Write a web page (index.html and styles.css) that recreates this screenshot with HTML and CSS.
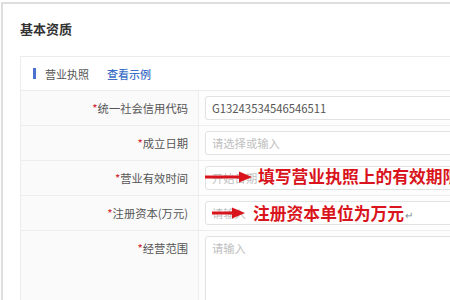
FILE: index.html
```html
<!DOCTYPE html>
<html lang="zh-CN">
<head>
<meta charset="utf-8">
<link rel="stylesheet" href="styles.css">
</head>
<body>
<div class="frame">
  <h2 class="title">基本资质</h2>
  <div class="card">
    <div class="card-head">
      <span class="bar"></span>
      <span class="head-text">营业执照</span>
      <a class="head-link">查看示例</a>
    </div>
    <div class="row">
      <div class="label"><span class="req">*</span>统一社会信用代码</div>
      <div class="value"><div class="input">G13243534546546511</div></div>
    </div>
    <div class="row">
      <div class="label"><span class="req">*</span>成立日期</div>
      <div class="value"><div class="input ph">请选择或输入</div></div>
    </div>
    <div class="row">
      <div class="label"><span class="req">*</span>营业有效时间</div>
      <div class="value"><div class="input ph">开始日期<span class="cal"></span></div></div>
    </div>
    <div class="row">
      <div class="label"><span class="req">*</span>注册资本(万元)</div>
      <div class="value"><div class="input ph">请输入</div></div>
    </div>
    <div class="row row-tall">
      <div class="label"><span class="req">*</span>经营范围</div>
      <div class="value"><div class="textarea ph">请输入</div></div>
    </div>
  </div>
</div>

<div class="note note1">
  <svg class="arrow" width="48" height="12" viewBox="0 0 48 12"><path d="M0 6 H36" stroke="#d9141c" stroke-width="3"/><path d="M34 0.5 L47 6 L34 11.5 Z" fill="#d9141c"/></svg>
  <span class="note-text">填写营业执照上的有效期限</span>
</div>
<div class="note note2">
  <svg class="arrow" width="34" height="12" viewBox="0 0 34 12"><path d="M0 6 H22" stroke="#d9141c" stroke-width="3"/><path d="M20 0.5 L33 6 L20 11.5 Z" fill="#d9141c"/></svg>
  <span class="note-text">注册资本单位为万元</span><span class="ret">↵</span>
</div>
</body>
</html>
```

FILE: styles.css
```css
html, body {
  margin: 0;
  padding: 0;
  background: #fff;
  overflow: hidden;
  width: 450px;
  height: 300px;
}
body {
  font-family: "Noto Sans CJK SC", "Noto Sans", sans-serif;
  position: relative;
}
.frame {
  box-sizing: border-box;
  margin: 2px 0 0 1px;
  border-top: 2px solid #dedede;
  border-left: 2px solid #dedede;
  padding: 15px 0 0 17px;
  width: 449px;
  height: 298px;
  overflow: hidden;
}
.title {
  margin: 0;
  font-size: 13px;
  line-height: 20px;
  font-weight: 600;
  color: #333;
}
.card {
  margin-top: 17px;
  width: 640px;
  border: 1px solid #ececec;
  background: #fff;
}
.card-head {
  height: 33px;
  display: flex;
  align-items: center;
  padding-left: 12px;
  border-bottom: 1px solid #ececec;
  font-size: 11px;
}
.bar {
  width: 3px;
  height: 11px;
  background: #4b72d0;
  margin-right: 9px;
}
.head-text {
  color: #555;
}
.head-link {
  color: #3d6fc6;
  margin-left: 18px;
  font-weight: 500;
}
.row {
  display: flex;
  border-bottom: 1px solid #ededed;
}
.label {
  width: 167px;
  padding-right: 10px;
  background: #fafafa;
  border-right: 1px solid #ededed;
  text-align: right;
  font-size: 11.3px;
  line-height: 34px;
  color: #555;
  white-space: nowrap;
}
.req {
  color: #d0202a;
}
.value {
  flex: 1;
  padding: 5px 6px;
  background: #fdfdfd;
}
.input {
  height: 22px;
  border: 1px solid #e2e2e2;
  border-radius: 3px;
  background: #fff;
  padding: 0 6px;
  font-size: 11.3px;
  line-height: 22px;
  color: #555;
  width: 320px;
  display: flex;
  align-items: center;
}
.ph {
  color: #c0c0c0;
}
.cal {
  width: 6px;
  height: 6px;
  border: 1px solid #ccc;
  margin-left: 6px;
}
.textarea {
  height: 90px;
  border: 1px solid #e2e2e2;
  border-radius: 3px;
  background: #fff;
  padding: 3px 6px;
  font-size: 11.3px;
  line-height: 16px;
  width: 320px;
}
.note {
  position: absolute;
  display: flex;
  align-items: center;
  white-space: nowrap;
}
.note1 {
  left: 205px;
  top: 165px;
}
.note2 {
  left: 212px;
  top: 202px;
}
.note-text {
  font-size: 16.8px;
  font-weight: 700;
  color: #d9141c;
  line-height: 22px;
}
.note1 .arrow {
  margin-right: 5px;
  margin-top: 2px;
}
.note2 .arrow {
  margin-right: 7px;
}
.ret {
  font-size: 10px;
  color: #7a8a99;
  margin-left: 1px;
  margin-top: 3px;
}
```
